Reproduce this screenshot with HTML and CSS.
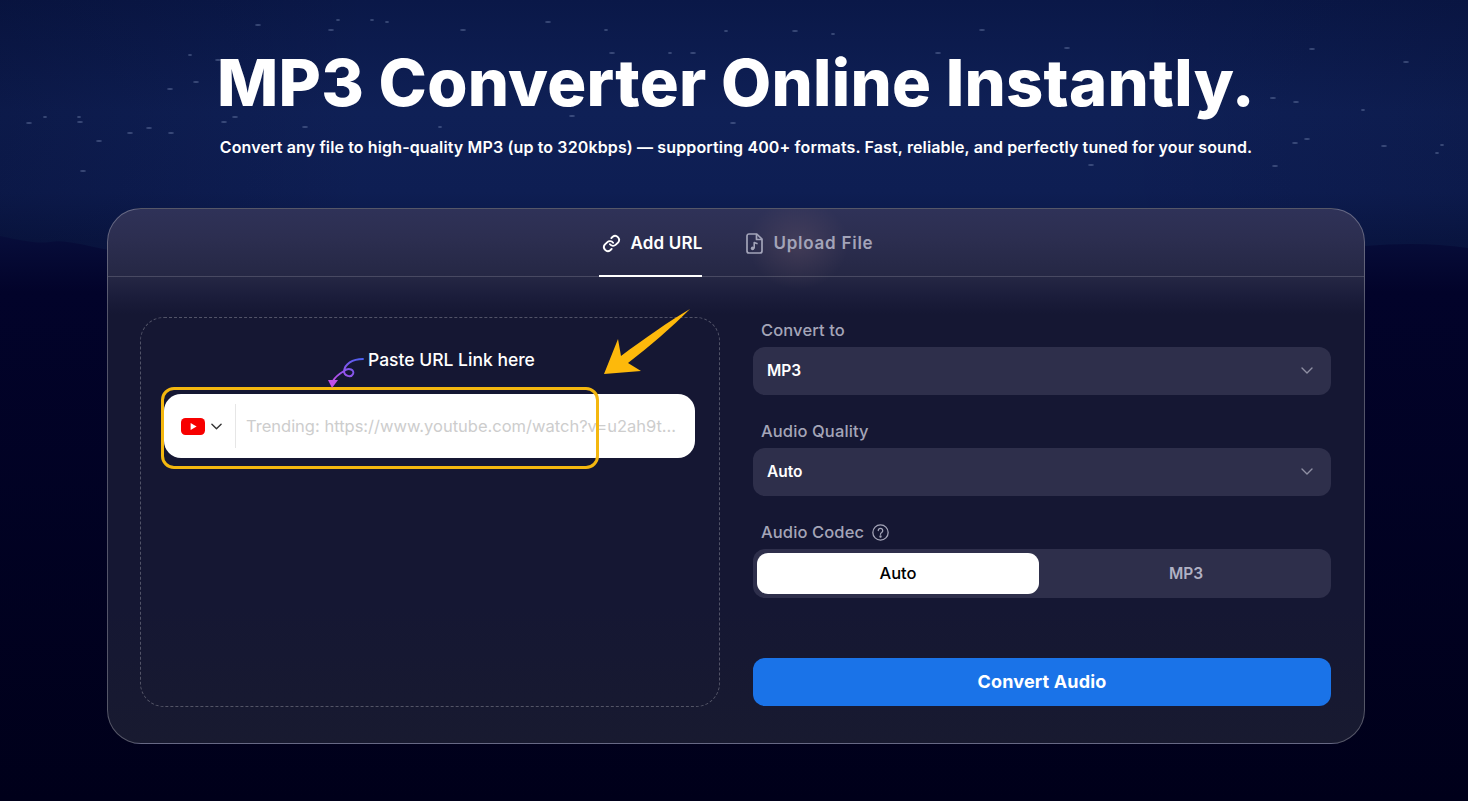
FILE: index.html
```html
<!DOCTYPE html>
<html lang="en">
<head>
<meta charset="utf-8">
<title>MP3 Converter Online</title>
<link rel="stylesheet" href="styles.css">
</head>
<body>
<svg class="sky" viewBox="0 0 1468 801" preserveAspectRatio="none" aria-hidden="true">
  <defs>
    <linearGradient id="land" x1="0" y1="0" x2="0" y2="1">
      <stop offset="0" stop-color="#070d3a"/>
      <stop offset="0.1" stop-color="#02032a"/>
      <stop offset="1" stop-color="#00001a"/>
    </linearGradient>
  </defs>
  <g class="stars">
    <ellipse cx="258" cy="25" rx="3" ry="1"/><ellipse cx="338" cy="20" rx="2" ry="1"/><ellipse cx="372" cy="20" rx="2" ry="1"/><ellipse cx="387" cy="22" rx="2" ry="1"/><ellipse cx="331" cy="30" rx="3" ry="1"/><ellipse cx="463" cy="30" rx="3" ry="1"/><ellipse cx="190" cy="55" rx="2" ry="1"/><ellipse cx="218" cy="60" rx="3" ry="1"/><ellipse cx="196" cy="82" rx="3" ry="1"/><ellipse cx="170" cy="89" rx="3" ry="1"/><ellipse cx="80" cy="122" rx="3" ry="1"/><ellipse cx="29" cy="123" rx="3" ry="1"/><ellipse cx="45" cy="117" rx="2" ry="1"/><ellipse cx="79" cy="117" rx="2" ry="1"/><ellipse cx="149" cy="128" rx="3" ry="1"/><ellipse cx="130" cy="133" rx="3" ry="1"/><ellipse cx="171" cy="133" rx="3" ry="1"/><ellipse cx="99" cy="141" rx="3" ry="1"/><ellipse cx="83" cy="171" rx="3" ry="1"/><ellipse cx="224" cy="122" rx="3" ry="1"/><ellipse cx="235" cy="117" rx="3" ry="1"/><ellipse cx="305" cy="127" rx="3" ry="1"/><ellipse cx="440" cy="127" rx="2" ry="1"/>
    <ellipse cx="982" cy="30" rx="3" ry="1"/><ellipse cx="1067" cy="48" rx="3" ry="1"/><ellipse cx="1273" cy="98" rx="3" ry="1"/><ellipse cx="1296" cy="102" rx="3" ry="1"/><ellipse cx="1363" cy="110" rx="2" ry="1"/><ellipse cx="1295" cy="143" rx="3" ry="1"/><ellipse cx="1307" cy="139" rx="3" ry="1"/><ellipse cx="1384" cy="146" rx="3" ry="1"/><ellipse cx="1442" cy="145" rx="2" ry="1"/><ellipse cx="1437" cy="153" rx="2" ry="1"/><ellipse cx="1275" cy="166" rx="3" ry="1"/><ellipse cx="1091" cy="165" rx="3" ry="1"/><ellipse cx="1312" cy="49" rx="3" ry="1"/><ellipse cx="1406" cy="62" rx="3" ry="1"/>
    <ellipse cx="548" cy="22" rx="3" ry="1"/><ellipse cx="726" cy="31" rx="2" ry="1"/><ellipse cx="670" cy="53" rx="2" ry="1"/><ellipse cx="693" cy="53" rx="3" ry="1"/><ellipse cx="612" cy="53" rx="3" ry="1"/><ellipse cx="572" cy="116" rx="3" ry="1"/><ellipse cx="733" cy="123" rx="3" ry="1"/><ellipse cx="938" cy="53" rx="3" ry="1"/><ellipse cx="795" cy="31" rx="3" ry="1"/><ellipse cx="833" cy="34" rx="2" ry="1"/><ellipse cx="606" cy="30" rx="2" ry="1"/>
  </g>
  <path class="land" fill="url(#land)" d="M0 236C20 240 35 244 50 242C65 239 85 246 110 250L1365 246C1400 243 1435 243 1468 248V801H0Z"/>
</svg>

<main class="page">
  <header class="hero">
    <h1 class="title">MP3 Converter Online Instantly.</h1>
    <p class="subtitle">Convert any file to high-quality MP3 (up to 320kbps) — supporting 400+ formats. Fast, reliable, and perfectly tuned for your sound.</p>
  </header>

  <section class="card">
    <span class="glow"></span>
    <nav class="tabs">
      <div class="tab tab-active">
        <svg class="tab-icon" viewBox="0 0 24 24" fill="none" stroke="currentColor" stroke-width="2.4" stroke-linecap="round" stroke-linejoin="round"><path d="M10 13a5 5 0 0 0 7.5.5l3-3a5 5 0 0 0-7-7l-1.7 1.7"/><path d="M14 11a5 5 0 0 0-7.5-.5l-3 3a5 5 0 0 0 7 7l1.7-1.7"/></svg>
        <span>Add URL</span>
      </div>
      <div class="tab tab-idle">
        <svg class="file-icon" viewBox="0 0 17 21" fill="none" stroke="currentColor" stroke-width="1.7" stroke-linejoin="round"><path d="M10.8 1H3a2 2 0 0 0-2 2v15a2 2 0 0 0 2 2h11a2 2 0 0 0 2-2V6.2Z"/><path d="M10.5 1v5.5H16"/><path d="M8.2 15.4V9.6l3.4 1.2" stroke-width="1.6"/><circle cx="6.6" cy="15.4" r="1.8" fill="currentColor" stroke="none"/></svg>
        <span>Upload File</span>
      </div>
    </nav>

    <div class="body">
      <div class="panel">
        <p class="hint">Paste URL Link here</p>
        <div class="url-box">
          <div class="source">
            <svg class="yt" viewBox="0 0 24 17"><rect width="24" height="17" rx="4.5" fill="#f70000"/><path d="M9.6 5v7l6-3.5Z" fill="#fff"/></svg>
            <svg class="chev-dark" viewBox="0 0 12 7" fill="none" stroke="#333" stroke-width="1.5" stroke-linecap="round" stroke-linejoin="round"><path d="M1 1l5 5 5-5"/></svg>
          </div>
          <span class="url-text">Trending: https://www.youtube.com/watch?v=u2ah9t...</span>
        </div>
        <span class="mark-box"></span>
        <svg class="mark-arrow" viewBox="0 0 92 70"><path fill="#fdb90b" d="M4 66 18 31 21 48C45 30 68 14 90 1 72 19 50 38 28 55L41 63Z"/></svg>
        <svg class="mark-curl" viewBox="0 0 40 35" fill="none">
          <defs><linearGradient id="curl" x1="1" y1="0" x2="0" y2="1"><stop offset="0" stop-color="#4a5ff0"/><stop offset="1" stop-color="#c04ee8"/></linearGradient></defs>
          <path stroke="url(#curl)" stroke-width="1.9" stroke-linecap="round" d="M38 4C27 4 20 9 19 16 19 21 26 23 28 19 30 15 24 12 19 16 14 19 10 22 8 26"/>
          <path fill="#c04ee8" d="M3 25 13 25 7 33Z"/>
        </svg>
      </div>

      <form class="options">
        <div class="field">
          <span class="label">Convert to</span>
          <div class="select"><span>MP3</span><svg class="chev" viewBox="0 0 12 7" fill="none" stroke="#8f90a3" stroke-width="1.4" stroke-linecap="round" stroke-linejoin="round"><path d="M1 1l5 5 5-5"/></svg></div>
        </div>
        <div class="field">
          <span class="label">Audio Quality</span>
          <div class="select"><span>Auto</span><svg class="chev" viewBox="0 0 12 7" fill="none" stroke="#8f90a3" stroke-width="1.4" stroke-linecap="round" stroke-linejoin="round"><path d="M1 1l5 5 5-5"/></svg></div>
        </div>
        <div class="field">
          <span class="label">Audio Codec
            <svg class="help" viewBox="0 0 16 16" fill="none" stroke="#a4a5b8" stroke-width="1.2" stroke-linecap="round"><circle cx="8" cy="8" r="7.2"/><path d="M5.9 6.2a2.1 2.1 0 1 1 3.2 1.8c-.7.4-1.1.9-1.1 1.7"/><circle cx="8" cy="11.8" r=".5" fill="#a4a5b8"/></svg>
          </span>
          <div class="segment">
            <div class="seg-on">Auto</div>
            <div class="seg-off">MP3</div>
          </div>
        </div>
        <button class="convert" type="button">Convert Audio</button>
      </form>
    </div>
  </section>
</main>
</body>
</html>
```
FILE: styles.css
```css
* { box-sizing: border-box; }
html, body { margin: 0; height: 100%; }
body {
  position: relative;
  overflow: hidden;
  font-family: "Inter", "Open Sans", sans-serif;
  color: #fff;
  background:
    linear-gradient(90deg, rgba(2,4,30,.22), transparent 25%, transparent 75%, rgba(2,4,30,.14)),
    linear-gradient(180deg, #0a1848 0%, #0f2056 14%, #0e1e53 24%, #0a1745 30%, #00001a 60%);
}
.sky { position: absolute; inset: 0; width: 100%; height: 100%; }
.stars ellipse { fill: #9fb0d6; opacity: .32; }
.page { position: relative; padding-top: 47px; }
.hero { text-align: center; height: 161px; padding-left: 4px; }
.title { margin: 0; font-size: 65px; line-height: 72px; font-weight: 800; letter-spacing: .25px; }
.subtitle { margin: 16px 0 0; font-size: 16px; line-height: 24px; font-weight: 600; letter-spacing: .13px; }

.card {
  position: relative;
  width: 1258px;
  height: 536px;
  margin: 0 0 0 107px;
  border: 1px solid rgba(255,255,255,.27);
  border-radius: 34px;
  overflow: hidden;
  background: linear-gradient(180deg, #2f3258 0, #2c2e50 30px, #252744 68px, #1c1e3c 85px, #151733 105px, #151733 400px, #181a30 100%);
}
.glow { position: absolute; left: 640px; top: -10px; width: 100px; height: 90px; border-radius: 50%; background: radial-gradient(closest-side, rgba(120,95,110,.3), transparent); }
.tabs {
  position: relative;
  display: flex;
  justify-content: center;
  gap: 44px;
  height: 68px;
  border-bottom: 1px solid rgba(255,255,255,.16);
}
.tab { display: flex; align-items: center; height: 68px; font-size: 17px; font-weight: 600; gap: 10px; }
.tab-icon { width: 19px; height: 19px; flex: none; }
.file-icon { width: 17px; height: 21px; flex: none; }
.tab-active { position: relative; padding: 0 0 0 3px; color: #fff; letter-spacing: .15px; }
.tab-active::after { content: ""; position: absolute; left: 0; right: 0; bottom: 0; height: 2px; background: #fff; }
.tab-idle { color: #a3a4b9; letter-spacing: .75px; }

.body { position: relative; display: grid; grid-template-columns: 580px 578px; gap: 33px; padding: 40px 32px 0; }
.panel {
  position: relative;
  height: 390px;
  padding: 29px 24px 0 23px;
  border: 1px dashed rgba(255,255,255,.26);
  border-radius: 24px;
}
.hint { margin: 0 0 21px 204px; font-size: 17.5px; line-height: 26px; font-weight: 500; white-space: nowrap; }
.url-box { display: flex; align-items: center; height: 64px; background: #fff; border-radius: 17px; }
.source { display: flex; align-items: center; gap: 6px; width: 72px; height: 44px; padding-left: 17px; border-right: 1px solid #e6e6e6; }
.yt { width: 24px; height: 17px; }
.chev-dark { width: 11px; height: 7px; }
.url-text { margin-left: 10px; font-size: 16.5px; color: #cdcdcd; white-space: nowrap; }
.mark-box { position: absolute; left: 20px; top: 69px; width: 438px; height: 82px; border: 3px solid #f4b70f; border-radius: 13px; }
.mark-arrow { position: absolute; left: 459px; top: -10px; width: 92px; height: 70px; }
.mark-curl { position: absolute; left: 184px; top: 37px; width: 40px; height: 35px; }

.options { display: flex; flex-direction: column; height: 389px; }
.field { display: flex; flex-direction: column; margin-bottom: 23px; }
.label { display: flex; align-items: center; gap: 8px; height: 26px; margin-bottom: 4px; padding-left: 8px; font-size: 16.5px; font-weight: 500; letter-spacing: .12px; color: #a4a5b8; }
.help { width: 17px; height: 17px; }
.select { display: flex; align-items: center; justify-content: space-between; height: 48px; padding: 0 18px 1px 14px; background: #2e2f4b; border-radius: 12px; font-size: 15.5px; font-weight: 600; }
.chev { width: 12px; height: 7px; }
.segment { display: flex; height: 49px; padding: 4px; background: #2e2f4b; border-radius: 12px; font-size: 16.5px; font-weight: 500; }
.seg-on { display: flex; align-items: center; justify-content: center; width: 282px; padding-bottom: 1px; background: #fff; color: #000; border-radius: 11px; }
.seg-off { display: flex; align-items: center; justify-content: center; flex: 1; padding-left: 6px; font-size: 15.5px; color: #b0b1c4; font-weight: 600; }
.convert { margin-top: auto; height: 48px; padding-bottom: 3px; border: 0; border-radius: 12px; background: #1a73e8; color: #fff; font: 700 18px "Inter", sans-serif; letter-spacing: .15px; }
```
